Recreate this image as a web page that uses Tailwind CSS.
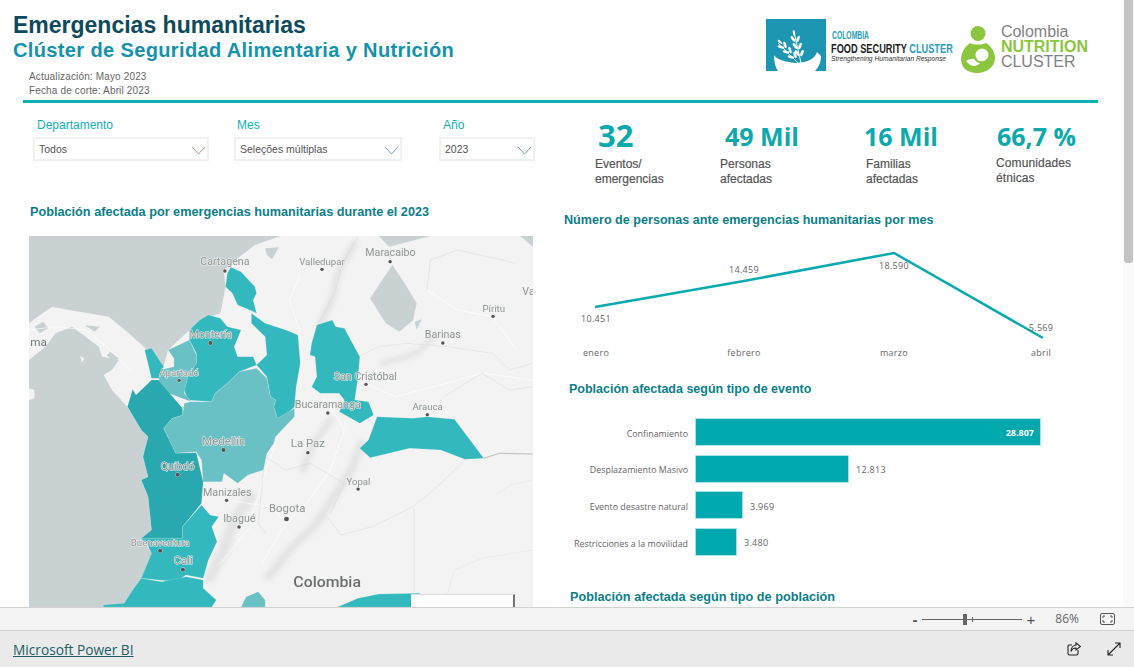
<!DOCTYPE html>
<html lang="es">
<head>
  <meta charset="UTF-8">
  <title>Emergencias humanitarias | Microsoft Power BI</title>
  <script src="https://cdn.jsdelivr.net/npm/@tailwindcss/browser@4"></script>
</head>
<body class="bg-white w-[1134px] h-[667px] overflow-hidden flex flex-col font-['Liberation_Sans',sans-serif]">

  <!-- Report canvas -->
  <main class="h-[607px] overflow-hidden flex shrink-0">
    <div class="w-[1123px] shrink-0">

      <!-- Header -->
      <header class="h-[100px] flex justify-between">
        <div class="pl-[13px] pt-[13px]">
          <h1 class="text-[23px] leading-[24px] font-bold text-[#0d4a5c]">Emergencias humanitarias</h1>
          <h2 class="text-[20px] leading-[26px] font-bold text-[#1393ab] tracking-[0.37px]">Clúster de Seguridad Alimentaria y Nutrición</h2>
          <div class="pl-[16px] pt-[7px] text-[10px] leading-[14px] text-[#666] tracking-[0.15px]">
            <p>Actualización: Mayo 2023</p>
            <p>Fecha de corte: Abril 2023</p>
          </div>
        </div>
        <!-- Logos -->
        <div class="flex pt-[19px] pr-[35px]">
          <svg class="w-[60px] h-[52px]" viewBox="0 0 60 52">
            <rect width="60" height="52" fill="#1d96b3"/>
            <path d="M8 36Q11 42 30 44Q48 43 51 33L55 37C55 44 52 49 49 52H12C10 49 8 44 8 36Z" fill="#fff"/>
            <path d="M12 24L32 44M28 13L35 44" stroke="#fff" stroke-width="1" fill="none"/>
            <g fill="#fff">
              <ellipse cx="14" cy="23" rx="3" ry="1.1" transform="rotate(40 14 23)"/>
              <ellipse cx="15" cy="28" rx="3.4" ry="1.4" transform="rotate(15 15 28)"/>
              <ellipse cx="19" cy="26" rx="3.4" ry="1.4" transform="rotate(75 19 26)"/>
              <ellipse cx="20" cy="33" rx="3.4" ry="1.4" transform="rotate(15 20 33)"/>
              <ellipse cx="24" cy="31" rx="3.4" ry="1.4" transform="rotate(75 24 31)"/>
              <ellipse cx="25" cy="38" rx="3.4" ry="1.4" transform="rotate(15 25 38)"/>
              <ellipse cx="29" cy="36" rx="3.4" ry="1.4" transform="rotate(75 29 36)"/>
              <ellipse cx="28" cy="14" rx="3" ry="1.1" transform="rotate(80 28 14)"/>
              <ellipse cx="27" cy="20" rx="3.4" ry="1.4" transform="rotate(55 27 20)"/>
              <ellipse cx="32" cy="20" rx="3.4" ry="1.4" transform="rotate(110 32 20)"/>
              <ellipse cx="29" cy="27" rx="3.4" ry="1.4" transform="rotate(55 29 27)"/>
              <ellipse cx="34" cy="27" rx="3.4" ry="1.4" transform="rotate(110 34 27)"/>
              <ellipse cx="31" cy="34" rx="3.4" ry="1.4" transform="rotate(55 31 34)"/>
              <ellipse cx="36" cy="34" rx="3.4" ry="1.4" transform="rotate(110 36 34)"/>
            </g>
          </svg>
          <svg class="w-[124px] h-[52px] ml-[5px] font-['Liberation_Sans',sans-serif]" viewBox="0 0 124 52">
            <text transform="translate(1 20) scale(0.68 1)" font-size="10" font-weight="700" fill="#2a9db8">COLOMBIA</text>
            <text transform="translate(0 33.5) scale(0.71 1)" font-size="13" font-weight="700" fill="#222">FOOD SECURITY <tspan fill="#2a9db8">CLUSTER</tspan></text>
            <text transform="translate(0 42) scale(1.03 1)" font-size="6.5" font-style="italic" fill="#333">Strengthening Humanitarian Response</text>
          </svg>
          <svg class="w-[36px] h-[48px] ml-[5px] mt-[6px]" viewBox="0 0 36 48">
            <circle cx="18" cy="8.5" r="7.5" fill="#8cc63f"/>
            <path d="M10 18C4 22 1 29 1 34C1 43 8 48 17 48C26 48 35 42 35 33C35 27 31 21 26 18C22 20 14 20 10 18Z" fill="#8cc63f"/>
            <circle cx="22" cy="30" r="6.5" fill="#fff"/>
            <path d="M6 36C11 33 16 33 21 37C18 41 14 42 10 40Z" fill="#fff"/>
            <path d="M15 34C18 38 24 39 28 34" stroke="#8cc63f" stroke-width="2" fill="none"/>
          </svg>
          <div class="ml-[5px] pt-[5px] text-[16px] leading-[15px] text-[#808285]">
            <p>Colombia</p>
            <p class="font-bold text-[#8cc63f]">NUTRITION</p>
            <p>CLUSTER</p>
          </div>
        </div>
      </header>

      <!-- Rule under header -->
      <div class="h-[3px] ml-[23px] mr-[25px] bg-[#0fb0b2]"></div>

      <!-- Body columns -->
      <div class="flex">

        <!-- Left column -->
        <section class="w-[560px] shrink-0">
          <div class="flex pt-[15px] pl-[33px] h-[100px]">
            <div class="w-[176px] mr-[25px]">
              <p class="pl-[4px] text-[12px] leading-[14px] text-[#0fb0b2]">Departamento</p>
              <div class="mt-[5px] h-[24px] border-2 border-[#f1f1f1] flex items-center justify-between pl-[4px] pr-[1px] pt-[2px] text-[10.5px] text-[#555]">
                <span>Todos</span>
                <svg class="w-[15px] h-[9px]" viewBox="0 0 15 9"><path d="M1 1L7.5 8L14 1" stroke="#b98a86" fill="none"/></svg>
              </div>
            </div>
            <div class="w-[168px] mr-[37px]">
              <p class="pl-[3px] text-[12px] leading-[14px] text-[#0fb0b2]">Mes</p>
              <div class="mt-[5px] h-[24px] border-2 border-[#f1f1f1] flex items-center justify-between pl-[4px] pr-[1px] pt-[2px] text-[10.5px] text-[#555]">
                <span>Seleções múltiplas</span>
                <svg class="w-[15px] h-[9px]" viewBox="0 0 15 9"><path d="M1 1L7.5 8L14 1" stroke="#6f9cc4" fill="none"/></svg>
              </div>
            </div>
            <div class="w-[96px]">
              <p class="pl-[4px] text-[12px] leading-[14px] text-[#0fb0b2]">Año</p>
              <div class="mt-[5px] h-[24px] border-2 border-[#f1f1f1] flex items-center justify-between pl-[4px] pr-[1px] pt-[2px] text-[10.5px] text-[#555]">
                <span>2023</span>
                <svg class="w-[15px] h-[9px]" viewBox="0 0 15 9"><path d="M1 1L7.5 8L14 1" stroke="#6f9cc4" fill="none"/></svg>
              </div>
            </div>
          </div>
          <h3 class="pl-[30px] text-[12.7px] leading-[16px] font-bold text-[#0b7f88] h-[25px] pt-[1px] whitespace-nowrap">Población afectada por emergencias humanitarias durante el 2023</h3>

          <!-- Map -->
          <div class="ml-[29px] w-[504px] h-[371px] mt-[8px] relative overflow-hidden blur-[0.3px]">
            <svg class="w-[504px] h-[371px] block font-['Roboto',sans-serif]" viewBox="84 18 1464 1113" preserveAspectRatio="none">
              <defs>
                <filter id="soft" x="-30%" y="-30%" width="160%" height="160%"><feGaussianBlur stdDeviation="8"/></filter>
              </defs>
              <rect x="84" y="18" width="1464" height="1113" fill="#c9d1d3"/>
              <!-- land -->
              <path fill="#f3f3f3" d="M815 18L830 18L1100 18L1130 50L1250 18L1510 18L1548 50L1548 1131L300 1131L360 1120L385 1080L430 1020L440 970L410 925L440 900L430 800L410 750L430 740L415 680L430 620L410 600L369 530L325 480L301 435L325 420L345 390L296 380L287 350L248 320L210 290L161 310L132 350L84 390L84 280L123 250L152 230L200 240L258 250L316 260L374 310L422 355L470 425L488 360L550 300L580 270L640 250L655 170L650 120L690 85L740 45Z"/>
              <path fill="#c9d1d3" d="M1140 105L1175 160L1210 220L1200 270L1160 305L1120 280L1075 205L1110 150ZM770 55L810 52L790 88L775 75ZM1205 275L1225 268L1210 300ZM100 290L125 275L140 295L115 310ZM245 285L290 290L275 305ZM310 375L330 395L345 385L320 365Z"/>
              <path fill="#f3f3f3" d="M232 378L245 385L238 398ZM84 475L100 480L100 505L84 510Z"/>
              <!-- terrain shading -->
              <g fill="none" stroke="#e3e3e3" stroke-linecap="round" filter="url(#soft)">
                <path stroke-width="20" d="M1030 40L985 120L960 220L930 280"/>
                <path stroke-width="16" d="M1270 310L1210 370L1110 400"/>
                <path stroke-width="24" d="M1050 640L1020 720L970 800L920 880L850 950L780 1040"/>
                <path stroke-width="32" d="M730 800L680 870L650 960L610 1040"/>
                <path stroke-width="20" d="M960 570L910 640L880 720"/>
              </g>
              <!-- roads and borders -->
              <g fill="none" stroke="#fff" stroke-width="2">
                <path d="M870 140L840 210L870 300L880 420L860 480L800 640L760 760L720 900L640 1000"/>
                <path d="M940 500L1000 600L960 720L890 820L830 880L760 1000"/>
                <path d="M1240 180L1330 240L1430 260L1500 360"/>
                <path d="M1060 460L1150 500L1260 470L1400 430L1548 450"/>
                <path d="M660 810L780 830L830 870"/>
                <path d="M84 300L160 290L250 300L320 360L380 420"/>
              </g>
              <g fill="none" stroke="#d2d2d2" stroke-width="1.2">
                <path d="M1040 380L1100 350L1180 340L1300 350L1430 370L1480 420L1548 400"/>
                <path d="M1040 20L1000 90L970 190L925 280"/>
                <path d="M1405 685L1450 670L1548 672" stroke="#a3a3a3" stroke-width="2"/>
                <path d="M1350 690L1270 770L1200 830L1080 890L990 915L950 860"/>
                <path d="M1203 835L1203 1090"/>
                <path d="M1300 1090L1320 1020L1400 985L1548 960" stroke-dasharray="6 3"/>
                <path d="M1440 795L1480 765L1548 750" stroke-dasharray="6 3"/>
                <path d="M770 680L830 720L900 700L1000 760L960 850"/>
                <path d="M765 720L750 880L770 910"/>
                <path d="M1240 180L1250 90L1330 60L1500 100"/>
                <path d="M1290 500L1400 430L1480 480L1548 470"/>
              </g>
              <!-- departments -->
              <g stroke="#f3f3f3" stroke-width="0.5">
                <path fill="#33b9bd" d="M670 112L700 125L740 170L745 190L735 210L745 250L725 240L690 225L675 190L655 170L660 130Z"/>
                <path fill="#33b9bd" d="M730 250L770 280L830 300L865 315L872 400L860 470L855 530L825 560L805 565L795 530L800 510L785 500L775 440L745 405L775 375L770 320L730 280Z"/>
                <path fill="#33b9bd" d="M605 255L640 265L660 290L700 300L680 350L690 380L735 380L745 405L695 425L660 460L625 490L615 515L545 510L535 480L545 440L570 400L570 370L550 330L550 300L580 270Z"/>
                <path fill="#69c1c5" d="M550 330L570 375L570 400L545 440L535 490L555 515L490 490L460 460L465 420L505 410L505 385L488 360Z"/>
                <path fill="#69c1c5" d="M745 415L775 445L785 500L800 510L795 530L805 565L855 535L855 560L800 620L795 640L775 670L765 720L720 735L690 760L650 730L645 755L590 755L585 690L570 665L510 670L475 595L500 565L530 555L535 520L555 515L615 515L625 490L660 460L695 425Z"/>
                <path fill="#2aa8af" d="M385 478L395 495L410 480L440 450L460 450L530 535L530 555L500 565L475 595L510 670L570 668L590 755L585 820L530 890L530 925L410 925L440 900L430 800L410 750L430 740L415 680L430 620L410 600L370 530Z"/>
                <path fill="#33b9bd" d="M420 360L440 355L475 410L462 445L440 445Z"/>
                <path fill="#33b9bd" d="M585 825L610 855L635 860L615 890L630 935L605 990L590 1045L540 1035L510 1055L410 1045L440 970L430 950L410 925L530 925L530 890Z"/>
                <path fill="#33b9bd" d="M410 1045L470 1055L540 1040L590 1050L590 1075L628 1110L615 1131L300 1131L300 1125L360 1120L385 1080Z"/>
                <path fill="#69c1c5" d="M700 1131L715 1100L750 1085L770 1110L770 1131Z"/>
                <path fill="#33b9bd" d="M980 1131L1040 1105L1100 1092L1220 1090L1220 1131Z"/>
                <path fill="#33b9bd" d="M920 285L965 270L975 290L1000 295L1045 380L1040 440L1030 510L1070 515L1085 555L1045 580L985 545L1000 510L985 490L930 490L905 470L920 440L915 380L900 375L905 340Z"/>
                <path fill="#33b9bd" d="M1095 560L1200 565L1240 560L1320 568L1405 685L1350 688L1280 660L1190 655L1075 683L1045 655L1070 630Z"/>
              </g>
              <!-- cities -->
              <g fill="#555" stroke="#f3f3f3" stroke-width="2" paint-order="stroke">
                <circle cx="653" cy="123" r="5"/><circle cx="935" cy="118" r="5"/><circle cx="1133" cy="95" r="5"/><circle cx="1432" cy="259" r="5"/><circle cx="1286" cy="339" r="5"/><circle cx="611" cy="339" r="6"/><circle cx="520" cy="451" r="5"/><circle cx="1063" cy="463" r="5"/><circle cx="952" cy="549" r="5"/><circle cx="1241" cy="554" r="5"/><circle cx="649" cy="660" r="6"/><circle cx="894" cy="668" r="5"/><circle cx="516" cy="734" r="6"/><circle cx="1040" cy="777" r="5"/><circle cx="658" cy="811" r="5"/><circle cx="832" cy="867" r="7"/><circle cx="694" cy="891" r="5"/><circle cx="465" cy="962" r="6"/><circle cx="531" cy="1019" r="6"/>
              </g>
              <g fill="#959595" font-size="31" text-anchor="middle" stroke="#eef2f2" stroke-width="3" paint-order="stroke">
                <text x="653" y="106">Cartagena</text>
                <text x="935" y="104" font-size="28">Valledupar</text>
                <text x="1134" y="78">Maracaibo</text>
                <text x="1434" y="245" font-size="28">Píritu</text>
                <text x="1286" y="323">Barinas</text>
                <text x="112" y="347" font-size="34" fill="#777">ma</text>
                <text x="1535" y="195">Va</text>
                <text x="612" y="324">Montería</text>
                <text x="520" y="438" font-size="28">Apartadó</text>
                <text x="1061" y="449">San Cristóbal</text>
                <text x="952" y="534">Bucaramanga</text>
                <text x="1242" y="540" font-size="28">Arauca</text>
                <text x="650" y="644" font-size="33">Medellín</text>
                <text x="894" y="652" font-size="33">La Paz</text>
                <text x="516" y="720">Quibdó</text>
                <text x="1041" y="764" font-size="28">Yopal</text>
                <text x="660" y="797">Manizales</text>
                <text x="834" y="846" font-size="33">Bogota</text>
                <text x="695" y="877">Ibagué</text>
                <text x="465" y="948" font-size="28">Buenaventura</text>
                <text x="532" y="1001" font-size="33">Cali</text>
                <text x="950" y="1070" font-size="46" font-weight="500" fill="#6f6f6f">Colombia</text>
              </g>
            </svg>
            <!-- legend box over the map -->
            <div class="absolute left-[382px] top-[358px] w-[104px] h-[20px] bg-white border-r-2 border-t border-[#777] border-t-[#ddd]"></div>
          </div>
        </section>

        <!-- Right column -->
        <section class="flex-1">
          <!-- KPI row -->
          <div class="h-[100px]">
            <div class="flex">
              <div class="w-[160px] pl-[35px] pt-[12px]">
                <p class="pl-[3px] text-[31px] leading-[40px] font-bold text-[#0aa9ad] font-['Open_Sans',sans-serif]">32</p>
                <p class="mt-[2px] text-[12px] leading-[15px] text-[#555] [-webkit-text-stroke:0.2px_#555]">Eventos/<br>emergencias</p>
              </div>
              <div class="w-[146px] pt-[13px]">
                <p class="pl-[5px] text-[25px] leading-[40px] font-bold text-[#0aa9ad] font-['Open_Sans',sans-serif]">49 Mil</p>
                <p class="mt-[1px] text-[12px] leading-[15px] text-[#555] [-webkit-text-stroke:0.2px_#555]">Personas<br>afectadas</p>
              </div>
              <div class="w-[130px] pt-[13px]">
                <p class="ml-[-2px] text-[25px] leading-[40px] font-bold text-[#0aa9ad] font-['Open_Sans',sans-serif]">16 Mil</p>
                <p class="mt-[1px] text-[12px] leading-[15px] text-[#555] [-webkit-text-stroke:0.2px_#555]">Familias<br>afectadas</p>
              </div>
              <div class="pt-[13px]">
                <p class="ml-[1px] text-[25px] leading-[40px] font-bold text-[#0aa9ad] font-['Open_Sans',sans-serif]">66,7 %</p>
                <p class="text-[12px] leading-[15px] text-[#555] [-webkit-text-stroke:0.2px_#555] tracking-[0.1px]">Comunidades<br>étnicas</p>
              </div>
            </div>
          </div>

          <h3 class="pl-[4px] pt-[9px] text-[12.6px] leading-[16px] font-bold text-[#0b7f88] whitespace-nowrap">Número de personas ante emergencias humanitarias por mes</h3>

          <!-- Line chart -->
          <svg class="block w-[563px] h-[143px]" viewBox="560 228 563 143" font-family="Open Sans, sans-serif" font-size="9" letter-spacing="0.3" fill="#666" text-anchor="middle">
            <polyline points="595,307 744,281 894,253 1043,338" fill="none" stroke="#0aa9ad" stroke-width="2.5"/>
            <text x="596" y="322">10.451</text>
            <text x="744" y="273">14.459</text>
            <text x="894" y="269">18.590</text>
            <text x="1041" y="331">5.569</text>
            <text x="596" y="356">enero</text>
            <text x="744" y="356">febrero</text>
            <text x="894" y="356">marzo</text>
            <text x="1041" y="356">abril</text>
          </svg>

          <h3 class="pl-[9px] pt-[10px] text-[12.5px] leading-[16px] font-bold text-[#0b7f88]">Población afectada según tipo de evento</h3>

          <!-- Bar chart -->
          <div class="mt-[21px] flex flex-col gap-[8.67px] text-[8.9px] text-[#666] font-['Open_Sans',sans-serif]">
            <div class="flex items-center h-[28px]">
              <span class="w-[128px] text-right pt-[3px]">Confinamiento</span>
              <div class="ml-[7px] w-[346px] h-[28px] bg-[#00a9ad] border border-[#a8e3e5] flex items-center justify-end pr-[6px] pt-[1px] text-[9px] text-white font-bold">28.807</div>
            </div>
            <div class="flex items-center h-[28px]">
              <span class="w-[128px] text-right pt-[3px]">Desplazamiento Masivo</span>
              <div class="ml-[7px] w-[154px] h-[28px] bg-[#00a9ad] border border-[#a8e3e5]"></div>
              <span class="ml-[7px] mt-[3px] text-[9px] tracking-[0.3px]">12.813</span>
            </div>
            <div class="flex items-center h-[28px]">
              <span class="w-[128px] text-right pt-[3px]">Evento desastre natural</span>
              <div class="ml-[7px] w-[48px] h-[28px] bg-[#00a9ad] border border-[#a8e3e5]"></div>
              <span class="ml-[7px] mt-[2px] text-[9px] tracking-[0.3px]">3.969</span>
            </div>
            <div class="flex items-center h-[28px]">
              <span class="w-[128px] text-right pt-[3px]">Restricciones a la movilidad</span>
              <div class="ml-[7px] w-[42px] h-[28px] bg-[#00a9ad] border border-[#a8e3e5]"></div>
              <span class="ml-[7px] mt-[1px] text-[9px] tracking-[0.3px]">3.480</span>
            </div>
          </div>

          <h3 class="pl-[10px] pt-[33px] text-[12.7px] leading-[16px] font-bold text-[#0b7f88]">Población afectada según tipo de población</h3>
        </section>
      </div>
    </div>

    <!-- Scrollbar -->
    <div class="w-[11px] bg-[#fafafa] shrink-0">
      <div class="w-[9px] h-[263px] mx-auto bg-[#c4c4c4] rounded-b-[3px]"></div>
    </div>
  </main>

  <!-- Zoom bar -->
  <div class="h-[24px] shrink-0 bg-[#f4f4f4] border-t border-b border-[#d2d2d2] flex items-center justify-end">
    <span class="text-[15px] leading-none font-bold text-[#555] mr-[4px]">-</span>
    <div class="relative w-[100px] h-[1px] bg-[#666]">
      <div class="absolute left-[41px] top-[-5px] w-[4px] h-[11px] bg-[#666]"></div>
      <div class="absolute left-[50px] top-[-2px] w-[1px] h-[5px] bg-[#666]"></div>
    </div>
    <span class="ml-[5px] text-[15px] leading-none text-[#555]">+</span>
    <span class="ml-[20px] text-[12px] text-[#666] font-['Open_Sans',sans-serif]">86%</span>
    <svg class="ml-[21px] mr-[19px] w-[15px] h-[12px]" viewBox="0 0 15 12" fill="none" stroke="#555">
      <rect x="0.5" y="0.5" width="14" height="11" rx="1.5"/>
      <path d="M3 5V3H5M10 3H12V5M12 7V9H10M5 9H3V7"/>
    </svg>
  </div>

  <!-- Power BI footer -->
  <footer class="flex-1 bg-[#eaeaea] flex items-center justify-between pl-[13px] pr-[13px]">
    <a href="#" class="pt-[2px] text-[13.7px] text-[#1b5e66] underline font-['Open_Sans',sans-serif]">Microsoft Power BI</a>
    <div class="flex items-center gap-[26px]">
      <svg class="w-[14px] h-[14px]" viewBox="0 0 14 14" fill="none" stroke="#222" stroke-width="1.1">
        <path d="M5 3H2C1.2 3 1 3.5 1 4V11.5C1 12.5 1.5 13 2.5 13H9.5C10.5 13 11 12.5 11 11.5V8"/>
        <path d="M9 1L13.5 4.5L9 8V6C6.5 6 5 7 4 9.5C4 6 6 3.2 9 3Z"/>
      </svg>
      <svg class="w-[14px] h-[14px]" viewBox="0 0 14 14" fill="none" stroke="#222" stroke-width="1.1">
        <path d="M1 13L13 1M8 1H13V6M1 8V13H6"/>
      </svg>
    </div>
  </footer>

</body>
</html>
